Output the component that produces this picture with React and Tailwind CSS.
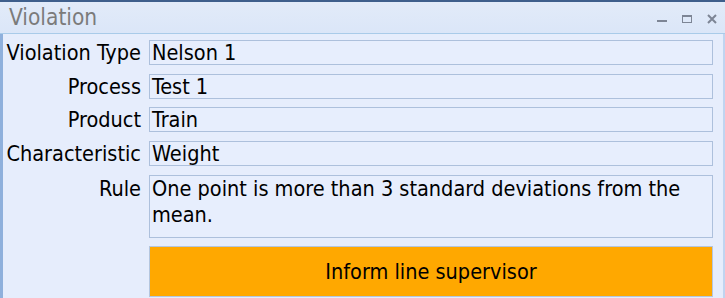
import { useState } from "react";

const fields = [
  { label: "Violation Type", value: "Nelson 1" },
  { label: "Process", value: "Test 1" },
  { label: "Product", value: "Train" },
  { label: "Characteristic", value: "Weight" },
];

const WindowButtons = () => (
  <div className="flex items-center gap-[15px] pr-[8px] pt-[2px]">
    {/* minimize */}
    <svg width="10" height="10" viewBox="0 0 10 10">
      <rect x="0" y="6" width="10" height="2" fill="#7d8595" />
    </svg>
    {/* maximize */}
    <svg width="10" height="10" viewBox="0 0 10 10">
      <rect x="0.5" y="1.5" width="9" height="7" fill="none" stroke="#7d8595" />
      <rect x="0" y="1" width="10" height="2" fill="#7d8595" />
    </svg>
    {/* close */}
    <svg width="10" height="10" viewBox="0 0 10 10">
      <path d="M1 1 L9 9 M9 1 L1 9" stroke="#7d8595" strokeWidth="2" />
    </svg>
  </div>
);

export default function App() {
  const [clicked, setClicked] = useState(false);

  return (
    <div
      className="w-[725px] h-[298px] overflow-hidden flex flex-col bg-[#e6edfc] border-t-2 border-[#3f5f8c] text-black"
      style={{ fontFamily: '"DejaVu Sans Condensed", "DejaVu Sans", sans-serif' }}
    >
      {/* title bar */}
      <div className="h-[32px] flex items-center justify-between pl-[9px] bg-gradient-to-b from-[#e2ebf9] to-[#dbe6f8] border-b border-[#a9cbe9]">
        <span className="text-[22.5px] leading-none text-[#7b7b7b]">Violation</span>
        <WindowButtons />
      </div>

      {/* content */}
      <div className="flex-1 flex border-l-[3px] border-[#8fb0dc]">
        <div className="grid grid-cols-[138px_564px] gap-x-2 gap-y-2 pt-[6px] text-[21.5px]">
          {fields.map((f) => (
            <div key={f.label} className="contents">
              <div className="h-[25px] leading-[25px] text-right whitespace-nowrap">{f.label}</div>
              <div className="h-[25px] leading-[23px] border border-[#adc0dc] bg-[#e7eefd] pl-[2px] whitespace-nowrap">
                {f.value}
              </div>
            </div>
          ))}
          <div className="leading-[26px] pt-[1px] text-right">Rule</div>
          <div className="h-[63px] leading-[26px] border border-[#adc0dc] bg-[#e7eefd] pl-[2px] pr-[20px]">
            One point is more than 3 standard deviations from the mean.
          </div>
          <div />
          <button
            onClick={() => setClicked(!clicked)}
            className="h-[51px] bg-[#ffa800] border border-[#b4c6df] flex items-center justify-center"
          >
            Inform line supervisor
          </button>
        </div>
        <div className="flex-1" />
        <div className="w-[2px] bg-[#c0d4f0]" />
      </div>
    </div>
  );
}
